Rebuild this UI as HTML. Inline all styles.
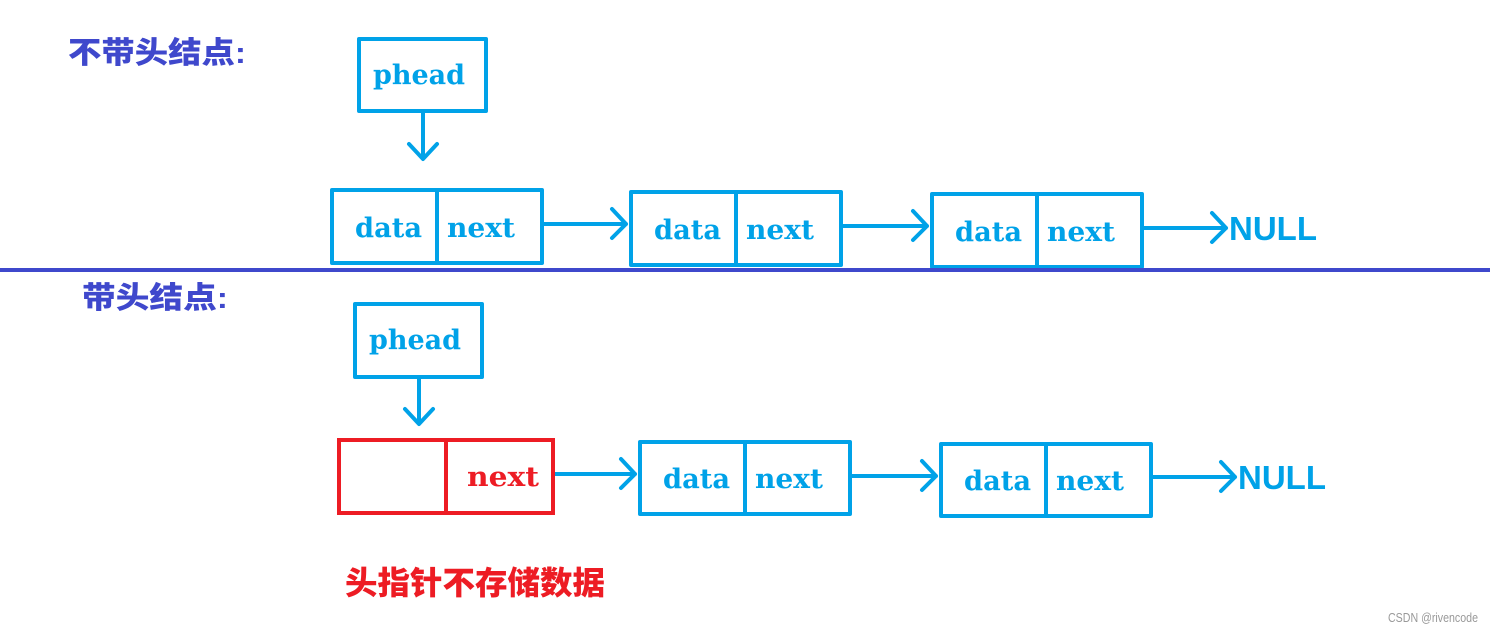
<!DOCTYPE html>
<html><head><meta charset="utf-8"><style>
html,body{margin:0;padding:0;background:#fff;}
svg{display:block}
.s{font-family:"DejaVu Serif","Liberation Serif",serif;font-weight:bold;font-size:27px;fill:#00a2e8}
.n{font-family:"Liberation Sans",sans-serif;font-weight:bold;font-size:33px;fill:#00a2e8}
.c{font-family:"Liberation Sans","Noto Sans CJK SC",sans-serif;font-weight:900;font-size:30px;fill:#3f48cc}
</style></head><body>
<svg width="1493" height="632" viewBox="0 0 1493 632" xmlns="http://www.w3.org/2000/svg">
<g fill="none" stroke="#00a2e8" stroke-width="4" stroke-linecap="round" stroke-linejoin="round">
<rect x="359" y="39" width="127" height="72"/>
<path d="M423 113V158M409 144L423 159L437 144"/>
<rect x="332" y="190" width="210" height="73"/><path d="M437 190V263"/>
<rect x="631" y="192" width="210" height="73"/><path d="M736 192V265"/>
<rect x="932" y="194" width="210" height="73"/><path d="M1037 194V267"/>
<path d="M543 224H626M612 209L626 224L612 238"/>
<path d="M842 226H927M913 211L927 226L913 240"/>
<path d="M1143 228H1226M1212 213L1226 228L1212 242"/>
<rect x="355" y="304" width="127" height="73"/>
<path d="M419 379V423M405 409L419 424L433 409"/>
<rect x="640" y="442" width="210" height="72"/><path d="M745 442V514"/>
<rect x="941" y="444" width="210" height="72"/><path d="M1046 444V516"/>
<path d="M554 474H635M621 459L635 474L621 488"/>
<path d="M851 476H936M922 461L936 476L922 490"/>
<path d="M1152 477H1235M1221 462L1235 477L1221 491"/>
</g>
<rect x="339" y="440" width="214" height="73" fill="none" stroke="#ed1c24" stroke-width="4"/>
<path d="M446 440V513" stroke="#ed1c24" stroke-width="4"/>
<rect x="0" y="268" width="1490" height="4" fill="#3f48cc"/>
<text class="s" x="373" y="84" textLength="92" lengthAdjust="spacingAndGlyphs">phead</text>
<text class="s" x="355" y="237" textLength="67" lengthAdjust="spacingAndGlyphs">data</text>
<text class="s" x="447" y="237" textLength="68" lengthAdjust="spacingAndGlyphs">next</text>
<text class="s" x="654" y="239" textLength="67" lengthAdjust="spacingAndGlyphs">data</text>
<text class="s" x="746" y="239" textLength="68" lengthAdjust="spacingAndGlyphs">next</text>
<text class="s" x="955" y="241" textLength="67" lengthAdjust="spacingAndGlyphs">data</text>
<text class="s" x="1047" y="241" textLength="68" lengthAdjust="spacingAndGlyphs">next</text>
<text class="n" x="1229" y="240" textLength="88" lengthAdjust="spacingAndGlyphs">NULL</text>
<text class="s" x="369" y="349" textLength="92" lengthAdjust="spacingAndGlyphs">phead</text>
<text class="s" x="467" y="486" style="fill:#ed1c24" textLength="72" lengthAdjust="spacingAndGlyphs">next</text>
<text class="s" x="663" y="488" textLength="67" lengthAdjust="spacingAndGlyphs">data</text>
<text class="s" x="755" y="488" textLength="68" lengthAdjust="spacingAndGlyphs">next</text>
<text class="s" x="964" y="490" textLength="67" lengthAdjust="spacingAndGlyphs">data</text>
<text class="s" x="1056" y="490" textLength="68" lengthAdjust="spacingAndGlyphs">next</text>
<text class="n" x="1238" y="489" textLength="88" lengthAdjust="spacingAndGlyphs">NULL</text>
<text class="c" x="68" y="63" textLength="178" lengthAdjust="spacingAndGlyphs">不带头结点:</text>
<text class="c" x="82" y="308" textLength="146" lengthAdjust="spacingAndGlyphs">带头结点:</text>
<text class="c" x="345" y="594" style="fill:#ed1c24;font-size:32px" textLength="260" lengthAdjust="spacingAndGlyphs">头指针不存储数据</text>
<text x="1388" y="622" textLength="90" lengthAdjust="spacingAndGlyphs" style="font-family:'Liberation Sans',sans-serif;font-size:13px;fill:#999">CSDN @rivencode</text>
</svg>
</body></html>
